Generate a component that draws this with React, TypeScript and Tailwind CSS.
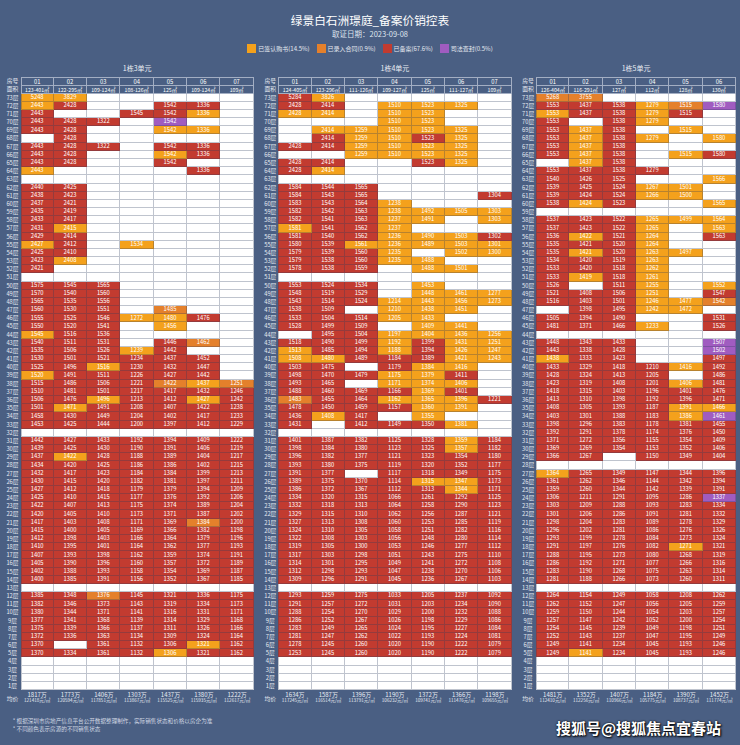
import React from 'react';

type Cell = { s: string; v: string };

const BG: Record<string, string> = {
  R: 'bg-[#c23b30] text-white',
  Y: 'bg-[#f4a11c] text-white',
  O: 'bg-[#e4802b] text-white',
  P: 'bg-[#a05cc0] text-white',
  W: 'bg-white',
};

// floor, then one token per unit: "." empty, "-" whole row empty, letter prefix = status, bare number = 已备案
const P1 = `
73 Y5248 Y3829 . . . . .
72 Y2443 2428 . . 1542 1336 .
71 2443 . . 1545 1542 Y1336 .
70 2443 2428 1322 . P1542 . .
69 2443 2428 . . Y1542 Y1336 .
68 . 2428 . . . . .
67 2443 2428 1322 . 1542 1336 .
66 2443 2428 . . Y1542 1336 .
65 2443 2428 . . 1542 . .
64 Y2443 . . . . 1336 .
63 -
62 2440 2425 . . . . .
61 2438 2423 . . . . .
60 2437 2421 . . . . .
59 2435 2419 . . . . .
58 2433 2417 . . . . .
57 2431 Y2415 . . . . .
56 2429 2414 . . . . .
55 Y2427 2412 . Y1534 . . .
54 2425 2410 . . . . .
53 2423 Y2408 . . . . .
52 2421 . . . . . .
51 -
50 1575 1545 1565 . . . .
49 1570 1540 1560 . . . .
48 1565 1535 1556 . . . .
47 1560 1530 1551 . O1485 . .
46 1555 1525 1546 Y1272 Y1480 1476 .
45 1550 1520 1541 . Y1456 . .
44 Y1545 1516 1536 . . . .
43 1540 1511 1531 . 1446 O1462 .
42 1535 1506 1526 Y1239 1442 . .
41 1530 1501 1521 1234 1437 1452 .
40 1525 1496 Y1516 1230 1432 1447 .
39 Y1520 1491 1511 1226 1427 1442 .
38 1515 1486 1506 1221 O1422 Y1437 O1251
37 1510 1481 1501 1217 1417 1432 1246
36 1506 1476 Y1496 1213 1412 Y1427 1242
35 1501 Y1471 1491 1208 1407 1422 1238
34 1458 1430 1449 1204 1402 1417 1233
33 1453 1425 1444 1200 1397 1412 1229
32 -
31 1442 1427 1433 1192 1394 1409 1222
30 1439 1425 1430 1190 1391 1406 1219
29 1437 Y1422 1428 1188 1389 1404 1217
28 1434 1420 1425 1186 1386 1402 1215
27 1432 1417 1423 1184 1384 1399 1213
26 1430 1415 1420 1182 1381 1397 1211
25 1427 1412 1418 1179 1379 1394 1209
24 1425 1410 1415 1177 1376 1392 1206
23 1422 1407 1413 1175 1374 1389 1204
22 1420 1405 1410 1173 1371 1387 1202
21 1417 1403 1408 1171 1369 O1384 1200
20 1415 1400 1405 1169 1366 1382 1198
19 1412 1398 1403 1166 1364 1379 1196
18 1410 1395 1401 1164 1362 1377 1193
17 1407 1393 1398 1162 1359 1374 1191
16 1405 1390 1396 1160 1357 1372 1189
15 1402 1388 1393 1158 1354 1369 1187
14 1400 1385 1391 1156 1352 1367 1185
13 -
12 1385 1348 O1376 1145 1321 1336 1175
11 1382 1346 1373 1143 1319 1334 1173
10 1380 1344 1371 1141 1316 1331 1171
9 1377 1341 1368 1139 1314 1329 1168
8 1375 1339 1366 1137 1311 1326 1166
7 1372 1336 1363 1134 1309 1324 1164
6 1370 . 1361 1132 1306 Y1321 1162
5 1370 1334 1361 1132 Y1306 1321 1162
4 -
3 -
2 -
1 -`;

const P2 = `
73 5284 Y3826 . . . . .
72 2428 2414 . Y1510 Y1523 Y1325 .
71 Y2428 Y2414 . Y1510 Y1523 . .
70 . . . Y1510 Y1523 . .
69 . Y2414 Y1259 Y1510 Y1523 Y1325 .
68 . 2414 Y1259 Y1510 1523 Y1325 .
67 2428 2414 Y1259 Y1510 Y1523 Y1325 .
66 . . Y1259 Y1510 Y1523 Y1325 .
65 2428 2414 . . 1523 Y1325 .
64 2428 Y2414 . . . . .
63 -
62 1584 1544 1565 . . . .
61 1584 1543 1565 . . . 1304
60 1583 1543 1564 Y1238 . . .
59 1582 1542 1563 Y1238 Y1492 Y1505 Y1303
58 1582 1541 1563 Y1237 Y1491 . Y1303
57 Y1581 1541 1562 Y1237 . . .
56 1581 1540 1562 Y1236 Y1490 Y1503 1302
55 1580 1539 Y1561 Y1236 Y1489 Y1503 Y1301
54 1579 1539 1560 Y1235 . Y1502 Y1300
53 1579 1538 1560 Y1235 Y1488 . .
52 1578 1538 1559 . Y1488 Y1501 .
51 -
50 1553 1524 1534 . Y1453 . .
49 1548 1519 1529 . Y1448 Y1461 Y1277
48 1543 1514 1524 Y1214 Y1443 Y1456 Y1273
47 1538 1509 . Y1210 Y1438 Y1451 .
46 1533 1504 1514 Y1205 Y1433 . .
45 1528 1499 1509 . Y1409 Y1441 .
44 . 1495 1504 Y1197 Y1404 Y1436 Y1256
43 1518 1490 1499 Y1192 1399 Y1431 Y1251
42 Y1513 1485 1494 Y1188 1394 Y1426 Y1247
41 Y1508 Y1480 1489 1184 1389 Y1421 Y1243
40 1503 1475 . 1179 Y1384 Y1416 .
39 1498 1470 1479 Y1175 Y1379 1411 .
38 1493 1465 . Y1171 Y1374 Y1406 .
37 1488 1460 1469 1166 Y1369 1401 .
36 O1483 1455 1464 Y1162 Y1365 Y1396 1221
35 1478 1450 1459 1157 Y1360 Y1391 .
34 1436 Y1408 1417 . Y1355 . .
33 1431 . 1412 1149 1350 Y1381 .
32 -
31 1401 1387 1382 1125 1328 Y1359 1184
30 1398 1384 1380 1123 1325 Y1357 1182
29 1396 1382 1377 1121 1323 1354 1180
28 1393 1380 1375 1119 1320 1352 1177
27 1391 1377 . 1117 1318 1349 1175
26 1389 1375 1370 1114 Y1315 Y1347 1173
25 1386 1372 1367 1112 1313 Y1344 1171
24 1334 1320 1315 1066 1261 1292 1125
23 1332 1318 1313 1064 1258 1290 1123
22 1329 1315 1310 1062 1256 1287 1121
21 1327 1313 1308 1060 1253 1285 1119
20 1324 1310 1305 1058 1251 1282 1116
19 1322 1308 1303 1056 1248 1280 1114
18 1319 1305 1300 1053 1246 1277 1112
17 1317 1303 1298 1051 1243 1275 1110
16 1314 1301 1295 1049 1241 1272 1108
15 1312 1298 1293 1047 1238 1270 1106
14 1309 1296 1291 1045 1236 1267 1103
13 -
12 1293 1259 1275 1033 1205 1237 1092
11 1291 1257 1272 1031 1203 1234 1090
10 1288 1254 1270 1029 1200 1232 1088
9 1286 1252 1267 1026 1198 1229 1086
8 1283 1249 1265 1024 1195 1227 1084
7 1281 1247 1262 1022 1193 1224 1081
6 1278 1245 1260 1020 1190 1222 1079
5 1253 1245 1260 1020 1190 1222 1079
4 -
3 -
2 -
1 -`;

const P3 = `
73 O5268 O3755 . . . .
72 1553 1437 1538 Y1279 O1515 P1580
71 Y1553 1437 1538 Y1279 1515 .
70 1553 . 1538 Y1279 . .
69 1553 Y1437 1538 . Y1515 .
68 1553 Y1437 1538 Y1279 . Y1580
67 1553 Y1437 1538 . . .
66 1553 Y1437 1538 . Y1515 1580
65 . Y1437 1538 . . .
64 1553 1437 1538 1279 . .
63 1540 1426 1525 . . Y1566
62 1539 1425 1524 Y1267 Y1501 .
61 1539 1424 1524 Y1266 Y1500 .
60 1538 Y1424 1523 . . Y1565
59 -
58 1537 1423 1522 Y1265 Y1499 Y1564
57 1537 1423 1522 Y1265 . Y1563
56 1536 Y1422 1521 Y1264 . 1563
55 1535 1421 1520 Y1264 . .
54 1535 Y1421 1520 Y1263 Y1497 .
53 1534 1420 1519 Y1263 . .
52 1533 1420 1518 Y1262 . .
51 1533 Y1419 1518 Y1261 . .
50 1526 . 1511 Y1255 . Y1552
49 1521 1408 1506 Y1251 . 1547
48 1516 1403 1501 Y1246 Y1477 O1542
47 . 1398 1495 Y1242 Y1472 .
46 1505 1394 1490 . . 1531
45 1481 1371 1466 Y1233 . 1526
44 -
43 1448 1343 1433 . . P1507
42 1443 1338 1428 . . P1502
41 Y1438 1333 1423 . . 1497
40 1433 1329 1418 1210 Y1416 1492
39 1428 1324 1413 1205 . 1486
38 1423 1319 1408 1201 Y1406 1481
37 1418 1315 1403 1196 1401 1476
36 1413 1310 1398 1192 1396 1471
35 1408 1305 1393 1187 Y1391 Y1466
34 1403 1301 1388 1183 Y1386 P1461
33 1398 1296 1383 1178 1381 1455
32 1392 1291 1378 1174 1376 1450
31 1371 1272 1356 1155 1354 1409
30 1369 1269 1354 1153 1352 1406
29 1366 1267 . 1150 1349 1404
28 -
27 Y1364 1265 1349 1147 1344 1396
26 1361 1262 1346 1144 1342 1394
25 1359 1260 1344 1142 1339 1391
24 1306 1211 1291 1095 1286 P1337
23 1303 1209 1288 1093 1283 1334
22 1301 1206 1286 1091 1281 1332
21 1298 1204 1283 1089 1278 1329
20 1296 1202 1281 1086 1276 1326
19 1293 1199 1278 1084 1273 1324
18 1291 1197 1276 1082 Y1271 1321
17 1288 1195 1273 1080 1268 1319
16 1286 1192 1271 1077 1266 1316
15 1283 1190 1268 1075 1263 1314
14 1281 1188 1266 1073 1260 1311
13 -
12 1264 1154 1249 1058 1208 1262
11 1262 1152 1247 1056 1205 1259
10 1259 1150 1244 1054 1203 1257
9 1257 1147 1242 1052 1200 1254
8 1254 1145 1239 1049 1198 1251
7 1252 1143 1237 1047 1195 1249
6 1249 1141 1234 1045 1193 1246
5 1249 Y1141 1234 1045 1193 1246
4 -
3 -
2 -
1 -`;

function parse(src: string, n: number) {
  return src.trim().split('\n').map(line => {
    const [floor, ...rest] = line.trim().split(/\s+/);
    const cells: Cell[] =
      rest[0] === '-'
        ? Array.from({ length: n }, () => ({ s: 'W', v: '' }))
        : rest.map(t => (t === '.' ? { s: 'W', v: '' } : /^[A-Z]/.test(t) ? { s: t[0], v: t.slice(1) } : { s: 'R', v: t }));
    return { floor, cells };
  });
}

const panels = [
  {
    title: '1栋3单元',
    nos: ['01', '02', '03', '04', '05', '06', '07'],
    areas: ['123-401㎡', '122-295㎡', '109-124㎡', '108-126㎡', '125㎡', '109-124㎡', '109㎡'],
    rows: parse(P1, 7),
    avg: [['1817万', '121418元/㎡'], ['1773万', '120594元/㎡'], ['1406万', '117851元/㎡'], ['1303万', '113867元/㎡'], ['1437万', '115525元/㎡'], ['1380万', '115935元/㎡'], ['1222万', '112617元/㎡']],
  },
  {
    title: '1栋4单元',
    nos: ['01', '02', '03', '04', '05', '06', '07'],
    areas: ['124-405㎡', '123-296㎡', '111-126㎡', '109-127㎡', '125㎡', '111-127㎡', '109㎡'],
    rows: parse(P2, 7),
    avg: [['1634万', '117245元/㎡'], ['1587万', '116514元/㎡'], ['1396万', '113791元/㎡'], ['1190万', '106232元/㎡'], ['1372万', '109741元/㎡'], ['1366万', '111476元/㎡'], ['1198万', '109655元/㎡']],
  },
  {
    title: '1栋5单元',
    nos: ['01', '02', '03', '04', '05', '06'],
    areas: ['126-404㎡', '116-291㎡', '127㎡', '112㎡', '128㎡', '130㎡'],
    rows: parse(P3, 6),
    avg: [['1481万', '112410元/㎡'], ['1352万', '112256元/㎡'], ['1407万', '110966元/㎡'], ['1184万', '105775元/㎡'], ['1390万', '108737元/㎡'], ['1452万', '111774元/㎡']],
  },
];

const legend = [
  { label: '已签认购书(14.5%)', color: 'bg-[#f4a11c]' },
  { label: '已录入合同(0.9%)', color: 'bg-[#e4802b]' },
  { label: '已备案(67.6%)', color: 'bg-[#c23b30]' },
  { label: '司法查封(0.5%)', color: 'bg-[#a05cc0]' },
];

const Panel = ({ p }: { p: (typeof panels)[number] }) => (
  <div className="flex flex-col">
    <div className="pl-[16px] h-[10px] text-center text-[7px] leading-[10px] text-[#e9edf3]">{p.title}</div>
    <div className="mt-[3.8px]">
      {/* header rows */}
      <div className="flex h-[8.18px]">
        <div className="w-[16px] shrink-0 text-center text-[5.8px] leading-[8.18px] text-[#e6eaf1]">房号</div>
        {p.nos.map((n, i) => (
          <div key={n} className={`w-[33.33px] shrink-0 flex items-center justify-center text-[5.8px] border-t border-r border-[#a3aec3] ${i === 0 ? 'border-l' : ''}`}>{n}</div>
        ))}
      </div>
      <div className="flex h-[8.18px]">
        <div className="w-[16px] shrink-0 text-center text-[5.8px] leading-[8.18px] text-[#e6eaf1]">面积</div>
        {p.areas.map((a, i) => (
          <div key={i} className={`w-[33.33px] shrink-0 flex items-center justify-center whitespace-nowrap overflow-hidden text-[5.2px] border-t border-r border-b border-[#a3aec3] ${i === 0 ? 'border-l' : ''}`}>{a}</div>
        ))}
      </div>
      {p.rows.map(r => (
        <div key={r.floor} className="flex h-[8.18px]">
          <div className="w-[16px] shrink-0 text-center text-[5.8px] leading-[8.18px] text-[#e6eaf1]">{r.floor}层</div>
          {r.cells.map((c, i) => (
            <div
              key={i}
              className={`w-[33.33px] shrink-0 flex items-center justify-center text-[5.8px] border-r border-b border-[#2a3a5c]/30 ${i === 0 ? 'border-l' : ''} ${BG[c.s]}`}
            >
              {c.v}
            </div>
          ))}
        </div>
      ))}
      {/* 均价 */}
      <div className="flex h-[14px]">
        <div className="w-[16px] shrink-0 pt-[5px] text-center text-[5.8px] leading-[8px] text-[#e6eaf1]">均价</div>
        {p.avg.map(([t, u], i) => (
          <div key={i} className="w-[33.33px] shrink-0 pt-[1.5px] flex flex-col items-center text-[#e9edf3]">
            <div className="text-[6px] leading-[6.5px]">{t}</div>
            <div className="text-[4.6px] leading-[5px] whitespace-nowrap">{u}</div>
          </div>
        ))}
      </div>
    </div>
  </div>
);

export default function App() {
  return (
    <div className="relative w-[740px] h-[745px] overflow-hidden bg-[#4a5f83] text-white font-['Noto_Sans_CJK_SC','Noto_Sans',sans-serif]">
      <div className="h-[28px] pt-[12px] text-center text-[11.7px] leading-[16px]">绿景白石洲璟庭_备案价销控表</div>
      <div className="h-[12px] text-center text-[7.5px] leading-[12px] text-[#dfe5ee]">取证日期：2023-09-08</div>
      <div className="mt-[4.2px] h-[9px] flex justify-center gap-[7px]">
        {legend.map(l => (
          <div key={l.label} className="flex items-center gap-[2px]">
            <span className={`w-[9px] h-[9px] ${l.color}`} />
            <span className="text-[6px] leading-[9px] text-[#e6eaf1]">{l.label}</span>
          </div>
        ))}
      </div>

      <div className="mt-[10.3px] flex pl-[4.5px] gap-[8.5px]">
        {panels.map(p => (
          <Panel key={p.title} p={p} />
        ))}
      </div>

      <div className="mt-[13px] pl-[12.7px] text-[5.6px] leading-[8.3px] text-[#cfd6e2]">
        <div>* 根据深圳市房地产信息平台公开数据整理制作，实际销售状态和价格以房企为准</div>
        <div>* 不同颜色表示房源的不同销售状态</div>
      </div>

      {/* watermark */}
      <div className="absolute right-[19px] top-[719px] text-[15px] leading-[18px] font-bold text-white [text-shadow:1px_1px_2px_#000,0_0_2px_#000]">
        搜狐号@搜狐焦点宜春站
      </div>
    </div>
  );
}
